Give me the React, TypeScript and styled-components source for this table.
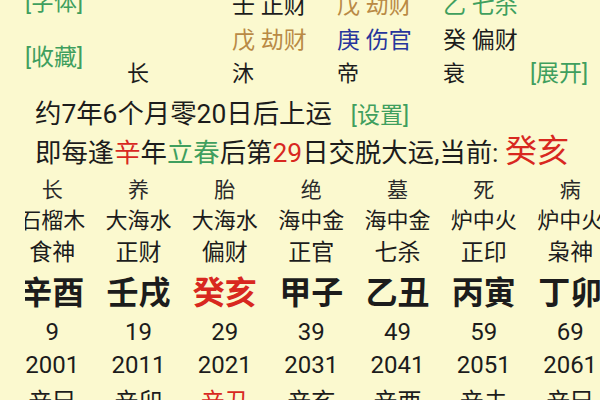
import React from "react";
import styled, { createGlobalStyle } from "styled-components";

const BG = "#fbf9cf";
const INK = "#1c1c1c";
const GREEN = "#3f9f5e";
const RED = "#d8281f";
const BROWN = "#b98a45";
const BLUE = "#27359c";

const GlobalStyle = createGlobalStyle`
  html, body {
    margin: 0;
    padding: 0;
    background: ${BG};
    overflow: hidden;
  }
  body {
    font-family: Roboto, "Noto Sans CJK SC", sans-serif;
    color: ${INK};
  }
`;

const Page = styled.div`
  width: 600px;
  height: 400px;
  overflow: hidden;
  background: ${BG};
`;

/* ---------- top table ---------- */
const TopGrid = styled.div`
  display: grid;
  grid-template-columns: 102px 105px 105px 106px 87px auto;
  grid-template-rows: 36px 34px 32px;
  align-items: center;
  padding-left: 25px;
  margin-top: -12px;
  white-space: nowrap;
`;

const SideButtons = styled.div`
  grid-column: 1;
  grid-row: 1 / 4;
  align-self: start;
  display: flex;
  flex-direction: column;
  gap: 25px;
`;

const Link = styled.span<{ $size?: number }>`
  color: ${GREEN};
  font-size: ${(p) => p.$size ?? 23}px;
  line-height: 30px;
`;

const Hidden = styled.div<{ $color: string }>`
  font-size: 23px;
  line-height: 30px;
  color: ${(p) => p.$color};
`;

const Stage = styled.div`
  font-size: 22px;
  line-height: 30px;
  color: ${INK};
`;

const ExpandCell = styled.div`
  grid-column: 6;
  grid-row: 3;
`;

/* ---------- info lines ---------- */
const InfoLine = styled.div<{ $h: number; $pt: number }>`
  box-sizing: border-box;
  height: ${(p) => p.$h}px;
  padding-top: ${(p) => p.$pt}px;
  display: flex;
  align-items: baseline;
  padding-left: 35px;
  font-size: 26.4px;
  white-space: nowrap;
`;

const InfoText = styled.span`
  line-height: 36px;
`;

const Tone = styled.span<{ $color: string; $size?: number }>`
  color: ${(p) => p.$color};
  ${(p) => (p.$size ? `font-size: ${p.$size}px;` : "")}
`;

const SetLink = styled(Link)`
  margin-left: 19px;
`;

/* ---------- dayun table ---------- */
const Scroller = styled.div`
  margin-left: 25px;
  overflow: hidden;
`;

const Track = styled.div`
  display: flex;
  margin-left: -16px;
`;

const Column = styled.div`
  flex: 0 0 86.33px;
  display: flex;
  flex-direction: column;
  align-items: center;
  white-space: nowrap;
`;

const Cell = styled.div<{ $red?: boolean }>`
  display: flex;
  align-items: center;
  justify-content: center;
  color: ${(p) => (p.$red ? RED : INK)};
`;

const StageCell = styled(Cell)`
  height: 30px;
  font-size: 21px;
  color: #2a2a2a;
`;

const NayinCell = styled(Cell)`
  height: 30px;
  font-size: 22px;
`;

const GodCell = styled(Cell)`
  height: 34px;
  font-size: 23px;
`;

const PillarCell = styled(Cell)`
  height: 46px;
  font-size: 32px;
  font-weight: 700;
`;

const AgeCell = styled(Cell)`
  height: 38px;
  font-size: 24px;
`;

const YearCell = styled(Cell)`
  height: 28px;
  font-size: 24px;
`;

const FlowCell = styled(Cell)`
  height: 40px;
  font-size: 24px;
`;

type Yun = {
  stage: string;
  nayin: string;
  god: string;
  pillar: string;
  age: number;
  year: number;
  flow: string;
  current?: boolean;
};

const yuns: Yun[] = [
  { stage: "长", nayin: "石榴木", god: "食神", pillar: "辛酉", age: 9, year: 2001, flow: "辛巳" },
  { stage: "养", nayin: "大海水", god: "正财", pillar: "壬戌", age: 19, year: 2011, flow: "辛卯" },
  { stage: "胎", nayin: "大海水", god: "偏财", pillar: "癸亥", age: 29, year: 2021, flow: "辛丑", current: true },
  { stage: "绝", nayin: "海中金", god: "正官", pillar: "甲子", age: 39, year: 2031, flow: "辛亥" },
  { stage: "墓", nayin: "海中金", god: "七杀", pillar: "乙丑", age: 49, year: 2041, flow: "辛酉" },
  { stage: "死", nayin: "炉中火", god: "正印", pillar: "丙寅", age: 59, year: 2051, flow: "辛未" },
  { stage: "病", nayin: "炉中火", god: "枭神", pillar: "丁卯", age: 69, year: 2061, flow: "辛巳" },
];

type HiddenStem = { text: string; color: string } | null;

const hiddenRows: HiddenStem[][] = [
  [null, { text: "壬 正财", color: INK }, { text: "戊 劫财", color: BROWN }, { text: "乙 七杀", color: GREEN }],
  [null, { text: "戊 劫财", color: BROWN }, { text: "庚 伤官", color: BLUE }, { text: "癸 偏财", color: INK }],
];

const stages = ["长", "沐", "帝", "衰"];

export default function App() {
  return (
    <Page>
      <GlobalStyle />
      <TopGrid>
        <SideButtons>
          <Link>[字体]</Link>
          <Link>[收藏]</Link>
        </SideButtons>
        {hiddenRows.map((row, r) =>
          row.map((h, c) => (
            <Hidden
              key={`${r}-${c}`}
              $color={h ? h.color : INK}
              style={{ gridRow: r + 1, gridColumn: c + 2 }}
            >
              {h ? h.text : ""}
            </Hidden>
          ))
        )}
        {stages.map((s, c) => (
          <Stage key={s} style={{ gridRow: 3, gridColumn: c + 2 }}>
            {s}
          </Stage>
        ))}
        <ExpandCell>
          <Link>[展开]</Link>
        </ExpandCell>
      </TopGrid>

      <InfoLine $h={43} $pt={6}>
        <InfoText>约7年6个月零20日后上运</InfoText>
        <SetLink>[设置]</SetLink>
      </InfoLine>
      <InfoLine $h={40} $pt={0}>
        <InfoText>
          即每逢<Tone $color={RED}>辛</Tone>年<Tone $color={GREEN}>立春</Tone>后第
          <Tone $color={RED}>29</Tone>日交脱大运,当前: <Tone $color={RED} $size={32}>癸亥</Tone>
        </InfoText>
      </InfoLine>

      <Scroller>
        <Track>
          {yuns.map((y) => (
            <Column key={y.age}>
              <StageCell>{y.stage}</StageCell>
              <NayinCell>{y.nayin}</NayinCell>
              <GodCell>{y.god}</GodCell>
              <PillarCell $red={y.current}>{y.pillar}</PillarCell>
              <AgeCell>{y.age}</AgeCell>
              <YearCell>{y.year}</YearCell>
              <FlowCell $red={y.current}>{y.flow}</FlowCell>
            </Column>
          ))}
        </Track>
      </Scroller>
    </Page>
  );
}
